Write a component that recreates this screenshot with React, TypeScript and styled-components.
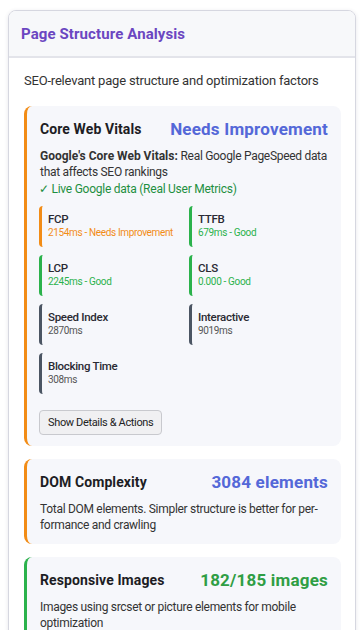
import React from "react";
import styled, { createGlobalStyle } from "styled-components";

const FONT = `Roboto, "Noto Sans", "Liberation Sans", sans-serif`;

const Global = createGlobalStyle`
  html, body { margin: 0; padding: 0; background: #ffffff; }
  body { font-family: ${FONT}; color: #222; }
  * { box-sizing: border-box; }
`;

const Page = styled.div`
  padding: 10px 8px 0 8px;
  height: 630px;
  overflow: hidden;
`;

const Panel = styled.section`
  border: 1px solid #d6d7e0;
  border-radius: 8px;
  background: #fff;
  box-shadow: 0 1px 4px rgba(60, 60, 90, 0.12);
  overflow: hidden;
`;

const PanelHeader = styled.header`
  background: #f7f8fa;
  border-bottom: 2px solid #e3e4ea;
  height: 47px;
  display: flex;
  align-items: center;
  padding: 0 12px;
`;

const PanelTitle = styled.h2`
  margin: 0;
  font-size: 15px;
  font-weight: 700;
  color: #6b46c1;
  letter-spacing: 0.1px;
`;

const PanelBody = styled.div`
  padding: 14px 14px 16px 15px;
  display: flex;
  flex-direction: column;
  gap: 13px;
`;

const Intro = styled.p`
  margin: 0 0 3px 0;
  font-size: 13px;
  line-height: 18px;
  color: #333;
  letter-spacing: -0.2px;
`;

const Card = styled.div<{ $accent: string }>`
  background: #f6f7fb;
  border-left: 3px solid ${(p) => p.$accent};
  border-radius: 8px;
  padding: 13px 11px 11px 12px;
`;

const CardHead = styled.div`
  display: flex;
  align-items: center;
  justify-content: space-between;
  height: 20px;
  margin-bottom: 9px;
  padding-left: 1px;
  padding-right: 2px;
`;

const CardTitle = styled.h3`
  margin: 0;
  font-size: 14px;
  font-weight: 700;
  color: #1d1d24;
  letter-spacing: 0.1px;
`;

const CardValue = styled.span<{ $color: string }>`
  font-size: 17px;
  font-weight: 700;
  color: ${(p) => p.$color};
  letter-spacing: 0.2px;
`;

const CardText = styled.p`
  margin: 0;
  font-size: 12px;
  line-height: 16px;
  color: #333;
  padding-left: 1px;
  letter-spacing: -0.3px;
  hyphens: auto;
  -webkit-hyphens: auto;
`;

const Strong = styled.strong`
  font-weight: 700;
  letter-spacing: 0;
`;

const LiveNote = styled.div`
  margin-top: 1px;
  font-size: 12px;
  line-height: 16px;
  color: #1e8f3f;
  letter-spacing: -0.25px;
`;

const MetricGrid = styled.div`
  display: grid;
  grid-template-columns: 1fr 1fr;
  column-gap: 10px;
  row-gap: 8px;
  margin-top: 9px;
  margin-right: 2px;
`;

const Metric = styled.div<{ $accent: string }>`
  border-left: 3px solid ${(p) => p.$accent};
  border-radius: 4px;
  padding: 6px 6px;
  height: 41px;
`;

const MetricLabel = styled.div`
  font-size: 11.5px;
  line-height: 14px;
  font-weight: 500;
  color: #2a2a33;
  letter-spacing: -0.3px;
`;

const MetricValue = styled.div<{ $color: string }>`
  font-size: 10px;
  line-height: 14px;
  color: ${(p) => p.$color};
  white-space: nowrap;
  letter-spacing: -0.35px;
`;

const ActionButton = styled.button`
  margin-top: 16px;
  font-family: ${FONT};
  font-size: 11px;
  letter-spacing: -0.35px;
  color: #222;
  background: #f0f0f2;
  border: 1px solid #c8c9ce;
  border-radius: 4px;
  height: 25px;
  padding: 0 8px;
  cursor: pointer;
`;

const ORANGE = "#f28c16";
const GREEN = "#2bb24c";
const GRAY = "#4b5563";
const BLUE = "#5468d8";

const metrics = [
  { label: "FCP", value: "2154ms - Needs Improvement", accent: ORANGE, color: ORANGE },
  { label: "TTFB", value: "679ms - Good", accent: GREEN, color: GREEN },
  { label: "LCP", value: "2245ms - Good", accent: GREEN, color: GREEN },
  { label: "CLS", value: "0.000 - Good", accent: GREEN, color: GREEN },
  { label: "Speed Index", value: "2870ms", accent: GRAY, color: "#555" },
  { label: "Interactive", value: "9019ms", accent: GRAY, color: "#555" },
  { label: "Blocking Time", value: "308ms", accent: GRAY, color: "#555" },
];

export default function App() {
  return (
    <>
      <Global />
      <Page>
        <Panel>
          <PanelHeader>
            <PanelTitle>Page Structure Analysis</PanelTitle>
          </PanelHeader>
          <PanelBody>
            <Intro>SEO-relevant page structure and optimization factors</Intro>

            <Card $accent={ORANGE}>
              <CardHead>
                <CardTitle>Core Web Vitals</CardTitle>
                <CardValue $color={BLUE}>Needs Improvement</CardValue>
              </CardHead>
              <CardText>
                <Strong>Google's Core Web Vitals:</Strong> Real Google PageSpeed data that affects SEO rankings
              </CardText>
              <LiveNote>✓ Live Google data (Real User Metrics)</LiveNote>
              <MetricGrid>
                {metrics.map((m) => (
                  <Metric key={m.label} $accent={m.accent}>
                    <MetricLabel>{m.label}</MetricLabel>
                    <MetricValue $color={m.color}>{m.value}</MetricValue>
                  </Metric>
                ))}
              </MetricGrid>
              <ActionButton>Show Details &amp; Actions</ActionButton>
            </Card>

            <Card $accent={ORANGE}>
              <CardHead>
                <CardTitle>DOM Complexity</CardTitle>
                <CardValue $color={BLUE}>3084 elements</CardValue>
              </CardHead>
              <CardText lang="en">
                Total DOM elements. Simpler structure is better for per&shy;formance and crawling
              </CardText>
            </Card>

            <Card $accent={GREEN}>
              <CardHead>
                <CardTitle>Responsive Images</CardTitle>
                <CardValue $color="#2f9e44">182/185 images</CardValue>
              </CardHead>
              <CardText>Images using srcset or picture elements for mobile optimization</CardText>
            </Card>
          </PanelBody>
        </Panel>
      </Page>
    </>
  );
}
